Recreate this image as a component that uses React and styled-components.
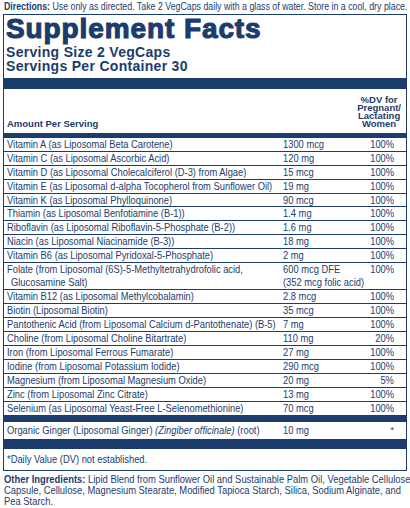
import React from "react";
import styled, { createGlobalStyle } from "styled-components";

const navy = "#1b3c6d";
const sans = `"Liberation Sans", Arial, sans-serif`;

const rows = [
  { name: ["Vitamin A (as Liposomal Beta Carotene)"], amount: ["1300 mcg"], dv: "100%" },
  { name: ["Vitamin C (as Liposomal Ascorbic Acid)"], amount: ["120 mg"], dv: "100%" },
  { name: ["Vitamin D (as Liposomal Cholecalciferol (D-3) from Algae)"], amount: ["15 mcg"], dv: "100%" },
  { name: ["Vitamin E (as Liposomal d-alpha Tocopherol from Sunflower Oil)"], amount: ["19 mg"], dv: "100%" },
  { name: ["Vitamin K (as Liposomal Phylloquinone)"], amount: ["90 mcg"], dv: "100%" },
  { name: ["Thiamin (as Liposomal Benfotiamine (B-1))"], amount: ["1.4 mg"], dv: "100%" },
  { name: ["Riboflavin (as Liposomal Riboflavin-5-Phosphate (B-2))"], amount: ["1.6 mg"], dv: "100%" },
  { name: ["Niacin (as Liposomal Niacinamide (B-3))"], amount: ["18 mg"], dv: "100%" },
  { name: ["Vitamin B6 (as Liposomal Pyridoxal-5-Phosphate)"], amount: ["2 mg"], dv: "100%" },
  {
    name: ["Folate (from Liposomal (6S)-5-Methyltetrahydrofolic acid,", "Glucosamine Salt)"],
    amount: ["600 mcg DFE", "(352 mcg folic acid)"],
    dv: "100%",
  },
  { name: ["Vitamin B12 (as Liposomal Methylcobalamin)"], amount: ["2.8 mcg"], dv: "100%" },
  { name: ["Biotin (Liposomal Biotin)"], amount: ["35 mcg"], dv: "100%" },
  { name: ["Pantothenic Acid (from Liposomal Calcium d-Pantothenate) (B-5)"], amount: ["7 mg"], dv: "100%" },
  { name: ["Choline (from Liposomal Choline Bitartrate)"], amount: ["110 mg"], dv: "20%" },
  { name: ["Iron (from Liposomal Ferrous Fumarate)"], amount: ["27 mg"], dv: "100%" },
  { name: ["Iodine (from Liposomal Potassium Iodide)"], amount: ["290 mcg"], dv: "100%" },
  { name: ["Magnesium (from Liposomal Magnesium Oxide)"], amount: ["20 mg"], dv: "5%" },
  { name: ["Zinc (from Liposomal Zinc Citrate)"], amount: ["13 mg"], dv: "100%" },
  { name: ["Selenium (as Liposomal Yeast-Free L-Selenomethionine)"], amount: ["70 mcg"], dv: "100%" },
];

const otherLines = [
  [true, "Lipid Blend from Sunflower Oil and Sustainable Palm Oil, Vegetable Cellulose"],
  [false, "Capsule, Cellulose, Magnesium Stearate, Modified Tapioca Starch, Silica, Sodium Alginate, and"],
  [false, "Pea Starch."],
];

const App = () => {
  return (
    <Page>
      <GlobalStyle />
      <Directions>
        <Squeeze $x={0.88}>
          <b>Directions:</b> Use only as directed. Take 2 VegCaps daily with a glass of water. Store
          in a cool, dry place.
        </Squeeze>
      </Directions>

      <FactsBox>
        <Title>Supplement Facts</Title>
        <Serving>
          Serving Size 2 VegCaps
          <br />
          Servings Per Container 30
        </Serving>

        <Bar $h={11} />
        <HeaderRow>
          <AmountHead>Amount Per Serving</AmountHead>
          <DvHead>
            %DV for
            <br />
            Pregnant/
            <br />
            Lactating
            <br />
            Women
          </DvHead>
        </HeaderRow>
        <Bar $h={5} />

        {rows.map((row, i) => (
          <Row key={i}>
            <Cell>
              {row.name.map((line, j) => (
                <Squeeze key={j} $block $indent={j > 0}>
                  {line}
                </Squeeze>
              ))}
            </Cell>
            <Cell>
              {row.amount.map((line, j) => (
                <Squeeze key={j} $block>
                  {line}
                </Squeeze>
              ))}
            </Cell>
            <DvCell>
              <Squeeze $right>{row.dv}</Squeeze>
            </DvCell>
          </Row>
        ))}

        <Bar $h={7} />
        <Row $tall>
          <Cell>
            <Squeeze>
              Organic Ginger (Liposomal Ginger) <i>(Zingiber officinale)</i> (root)
            </Squeeze>
          </Cell>
          <Cell>
            <Squeeze>10 mg</Squeeze>
          </Cell>
          <DvCell $star>*</DvCell>
        </Row>
        <Bar $h={10} />

        <Footnote>
          <Squeeze>*Daily Value (DV) not established.</Squeeze>
        </Footnote>
      </FactsBox>

      <Other>
        {otherLines.map(([label, text], i) => (
          <Squeeze key={i} $block $x={0.894}>
            {label && <b>Other Ingredients: </b>}
            {text}
          </Squeeze>
        ))}
      </Other>
    </Page>
  );
};

export default App;

/* ================= styled-components ================= */

const GlobalStyle = createGlobalStyle`
  body {
    margin: 0;
    background: #ffffff;
    font-family: ${sans};
    color: ${navy};
  }
`;

const Page = styled.div`
  width: 410px;
  height: 508px;
  overflow: hidden;
  background: #ffffff;
`;

// The label prints in a narrow face; Arial-width text squeezed horizontally stands in for it.
const Squeeze = styled.span`
  display: ${({ $block }) => ($block ? "block" : "inline-block")};
  width: max-content;
  white-space: nowrap;
  margin-left: ${({ $indent }) => ($indent ? "4px" : "0")};
  transform: scaleX(${({ $x }) => $x ?? 0.85});
  transform-origin: ${({ $right }) => ($right ? "right" : "left")} center;
`;

const Directions = styled.p`
  margin: 0;
  padding: 1px 0 0 4px;
  font-size: 10px;
  line-height: 12px;
`;

const FactsBox = styled.section`
  margin: 1px 3px 0 3px;
  border: 1.5px solid ${navy};
`;

const Title = styled.h1`
  margin: 0;
  padding-left: 2px;
  font-size: 28px;
  line-height: 28px;
  font-weight: 700;
  letter-spacing: 0.9px;
  -webkit-text-stroke: 1.1px ${navy};
`;

const Serving = styled.div`
  margin: 1.5px 0 5px 0;
  padding-left: 2px;
  font-size: 14px;
  line-height: 14px;
  font-weight: 700;
  letter-spacing: 0.3px;
`;

const Bar = styled.div`
  height: ${({ $h }) => $h}px;
  background: ${navy};
`;

const HeaderRow = styled.div`
  display: flex;
  justify-content: space-between;
  align-items: flex-end;
  padding: 7px 5px 4px 3px;
  font-weight: 700;
`;

const AmountHead = styled.div`
  font-size: 9.5px;
  line-height: 10px;
`;

const DvHead = styled.div`
  font-size: 9.5px;
  line-height: 8.3px;
  text-align: center;
`;

const Row = styled.div`
  display: grid;
  grid-template-columns: 276px 1fr 60px;
  padding: ${({ $tall }) => ($tall ? "2px 12px 2px 3px" : "0 12px 0 3px")};
  font-size: 11px;
  line-height: 12.95px;

  & + & {
    border-top: 1px solid ${navy};
  }
`;

const Cell = styled.div`
  min-width: 0;
`;

const DvCell = styled.div`
  text-align: right;
  font-size: ${({ $star }) => ($star ? "9px" : "11px")};
`;

const Footnote = styled.div`
  padding: 4px 3px;
  font-size: 11px;
  line-height: 13px;
`;

const Other = styled.div`
  margin-top: 3px;
  padding-left: 4px;
  font-size: 10.5px;
  line-height: 11px;
`;
